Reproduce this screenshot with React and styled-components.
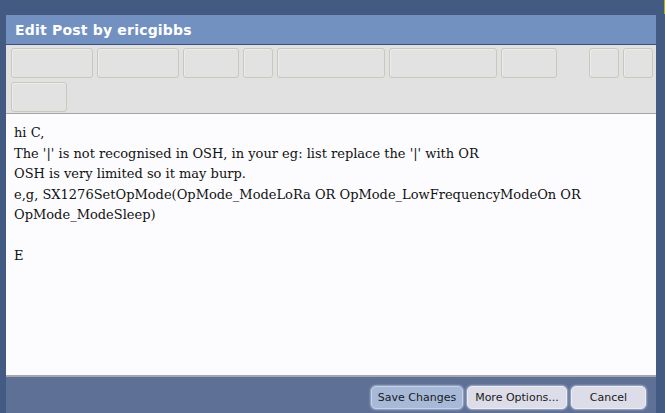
import styled, { createGlobalStyle } from 'styled-components';

const Global = createGlobalStyle`
  html, body {
    margin: 0;
    height: 100%;
    background: #435a82;
    overflow: hidden;
  }
`;

const S = {};

S.Page = styled.div`
  height: 413px;
  padding: 15px 9px 0 6px;
  box-sizing: border-box;
  position: relative;
`;

S.Corner = styled.div`
  position: absolute;
  top: 0;
  right: 0;
  width: 1px;
  height: 14px;
  background: #b4b400;
`;

S.Dialog = styled.div`
  height: 100%;
  display: flex;
  flex-direction: column;
  background: #5e7096;
`;

S.TitleBar = styled.div`
  height: 29px;
  background: #7290c0;
  border-bottom: 1px solid #3a4f78;
  display: flex;
  align-items: center;
  padding: 0 9px;
  color: #fff;
  font-family: 'DejaVu Sans', Verdana, sans-serif;
  font-weight: bold;
  font-size: 14px;
  letter-spacing: 0.2px;
`;

S.Toolbar = styled.div`
  height: 69px;
  box-sizing: border-box;
  background: #e1e1e1;
  border-bottom: 1px solid #a4a4a4;
  padding: 3px 0 0 5px;
  display: flex;
  flex-wrap: wrap;
  align-content: flex-start;
  gap: 4px;
`;

S.ToolButton = styled.div`
  width: ${(p) => p.$w}px;
  height: 30px;
  box-sizing: border-box;
  border: 1px solid #c9c8bd;
  border-radius: 3px;
  background: #e2e2e2;
  box-shadow: inset 1px 1px 0 #ececec;
  margin-left: ${(p) => p.$push || 0}px;
`;

S.Editor = styled.div`
  flex: 1;
  background: #fcfcff;
  border-bottom: 2px solid #a8a8ac;
  padding: 9px 8px;
  font-family: 'DejaVu Serif', Georgia, serif;
  font-size: 13px;
  line-height: 20.5px;
  color: #111;
`;

S.Line = styled.div`
  min-height: 20.5px;
  white-space: pre;
`;

S.Footer = styled.div`
  height: 36px;
  display: flex;
  justify-content: flex-end;
  align-items: flex-start;
  padding: 9px 10px 0 0;
  box-sizing: border-box;
  gap: 4px;
`;

S.Button = styled.div`
  width: ${(p) => p.$w}px;
  height: 23px;
  box-sizing: border-box;
  border-radius: 5px;
  background: ${(p) => (p.$primary ? '#a7b9d9' : '#dcdde8')};
  border: 1px solid ${(p) => (p.$primary ? '#c6d2e8' : '#eceef4')};
  box-shadow: 0 0 2px 1px rgba(220, 228, 245, 0.55);
  display: flex;
  align-items: center;
  justify-content: center;
  font-family: 'DejaVu Sans', Tahoma, sans-serif;
  font-size: 11px;
  color: #1a1a1a;
`;

const toolRow = [
  { w: 82 },
  { w: 82 },
  { w: 56 },
  { w: 30 },
  { w: 108 },
  { w: 108 },
  { w: 56 },
  { w: 30, push: 28 },
  { w: 30 },
  { w: 56 },
];

const lines = [
  'hi C,',
  "The '|' is not recognised in OSH, in your eg: list replace the '|' with OR",
  'OSH is very limited so it may burp.',
  'e,g, SX1276SetOpMode(OpMode_ModeLoRa OR OpMode_LowFrequencyModeOn OR',
  'OpMode_ModeSleep)',
  '',
  'E',
];

export default function App() {
  return (
    <>
      <Global />
      <S.Page>
        <S.Corner />
        <S.Dialog>
          <S.TitleBar>Edit Post by ericgibbs</S.TitleBar>
          <S.Toolbar>
            {toolRow.map((b, i) => (
              <S.ToolButton key={i} $w={b.w} $push={b.push} />
            ))}
          </S.Toolbar>
          <S.Editor>
            {lines.map((l, i) => (
              <S.Line key={i}>{l}</S.Line>
            ))}
          </S.Editor>
          <S.Footer>
            <S.Button $w={92} $primary>Save Changes</S.Button>
            <S.Button $w={100}>More Options...</S.Button>
            <S.Button $w={75}>Cancel</S.Button>
          </S.Footer>
        </S.Dialog>
      </S.Page>
    </>
  );
}
